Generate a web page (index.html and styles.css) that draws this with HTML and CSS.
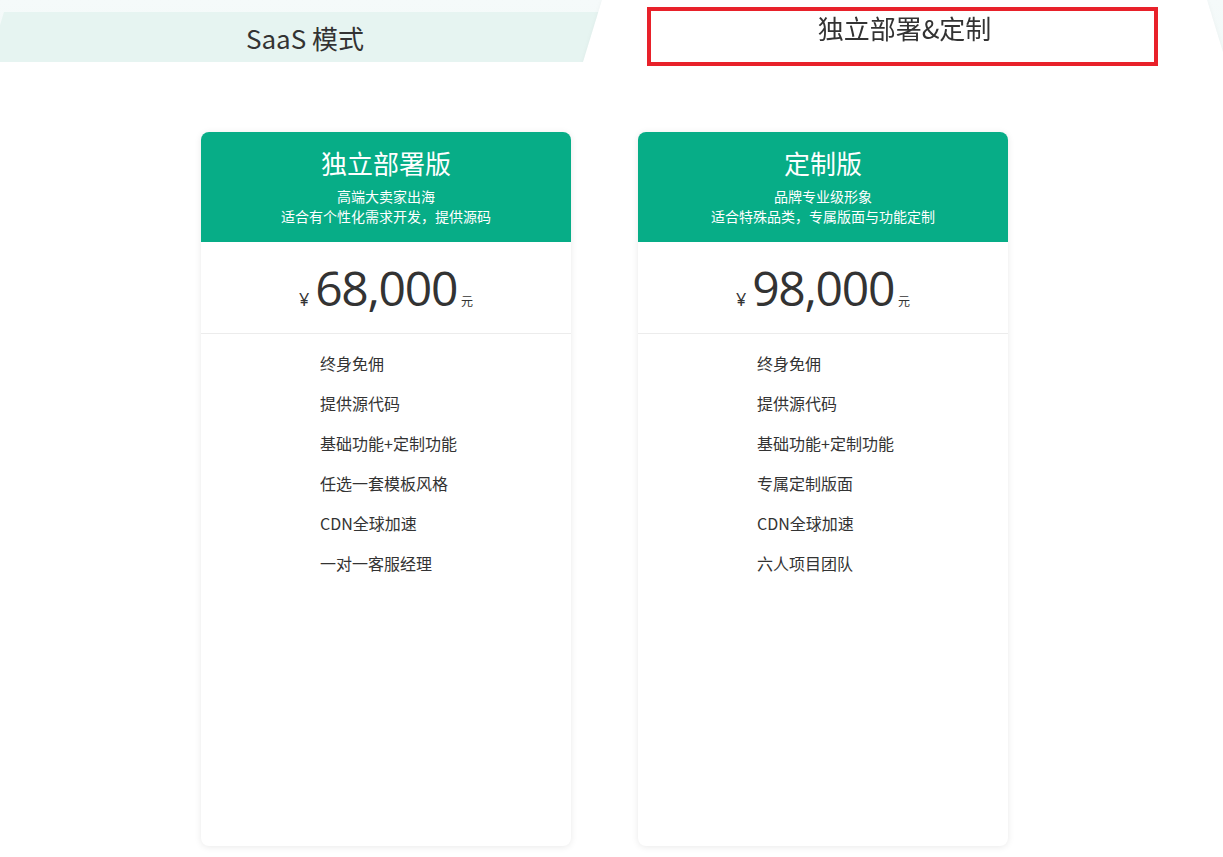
FILE: index.html
```html
<!DOCTYPE html>
<html lang="zh-CN">
<head>
<meta charset="utf-8">
<title>价格方案</title>
<link rel="stylesheet" href="styles.css">
</head>
<body>
<div class="page">
  <div class="tabbar">
    <div class="tab tab-inactive"><span class="tab-label">SaaS 模式</span></div>
    <div class="tab-active-wrap">
      <div class="tab tab-active"><span class="tab-label">独立部署&amp;定制</span></div>
    </div>
  </div>
  <div class="highlight"></div>

  <div class="cards">
    <div class="card">
      <div class="card-head">
        <div class="card-title">独立部署版</div>
        <div class="card-sub">高端大卖家出海</div>
        <div class="card-sub">适合有个性化需求开发，提供源码</div>
      </div>
      <div class="card-price">
        <span class="cur">¥</span><span class="num">68,000</span><span class="unit">元</span>
      </div>
      <ul class="features">
        <li>终身免佣</li>
        <li>提供源代码</li>
        <li>基础功能+定制功能</li>
        <li>任选一套模板风格</li>
        <li>CDN全球加速</li>
        <li>一对一客服经理</li>
      </ul>
    </div>
    <div class="card">
      <div class="card-head">
        <div class="card-title">定制版</div>
        <div class="card-sub">品牌专业级形象</div>
        <div class="card-sub">适合特殊品类，专属版面与功能定制</div>
      </div>
      <div class="card-price">
        <span class="cur">¥</span><span class="num">98,000</span><span class="unit">元</span>
      </div>
      <ul class="features">
        <li>终身免佣</li>
        <li>提供源代码</li>
        <li>基础功能+定制功能</li>
        <li>专属定制版面</li>
        <li>CDN全球加速</li>
        <li>六人项目团队</li>
      </ul>
    </div>
  </div>
</div>
</body>
</html>
```

FILE: styles.css
```css
* { box-sizing: border-box; }

html, body {
  margin: 0;
  padding: 0;
  background: #ffffff;
}

body {
  font-family: "Open Sans", "Noto Sans CJK SC", sans-serif;
  color: #333333;
  overflow: hidden;
}

.page {
  position: relative;
  width: 1223px;
  height: 857px;
}

/* ---------- tabs ---------- */
.tabbar {
  display: flex;
  height: 62px;
  background: linear-gradient(#f5fafa, #f2f9f8);
  overflow: hidden;
}

.tab {
  display: flex;
  justify-content: center;
  font-size: 26px;
  color: #333333;
  font-family: "Noto Sans CJK SC", sans-serif;
}

.tab-inactive {
  flex: 0 0 632px;
  margin-left: -11px;
  margin-top: 12px;
  height: 50px;
  line-height: 52px;
  background: #e6f4f1;
  clip-path: polygon(15px 0, 617px 0, 632px 100%, 0 100%);
}

.tab-active-wrap {
  flex: 0 0 643px;
  margin-left: -38px;
  height: 62px;
  position: relative;
  z-index: 1;
  filter: drop-shadow(0 2px 2px rgba(0, 0, 0, 0.05));
}

.tab-active {
  height: 62px;
  line-height: 56px;
  background: #ffffff;
  clip-path: polygon(19px 0, 624px 0, 643px 100%, 0 100%);
}

.tab-label {
  display: block;
}

.highlight {
  position: absolute;
  left: 647px;
  top: 7px;
  width: 511px;
  height: 59px;
  border: 4px solid #e8212a;
  z-index: 2;
}

/* ---------- cards ---------- */
.cards {
  display: flex;
  gap: 67px;
  padding-left: 201px;
  margin-top: 70px;
}

.card {
  width: 370px;
  height: 714px;
  background: #ffffff;
  border-radius: 8px;
  box-shadow: 0 1px 7px rgba(0, 0, 0, 0.09);
  overflow: hidden;
}

.card-head {
  height: 110px;
  background: #07ad87;
  color: #ffffff;
  text-align: center;
  padding-top: 13px;
  font-family: "Noto Sans CJK SC", sans-serif;
}

.card-title {
  font-size: 26px;
  line-height: 36px;
  margin-bottom: 6px;
}

.card-sub {
  font-size: 14px;
  line-height: 19.5px;
}

.card-price {
  height: 92px;
  border-bottom: 1px solid #ececec;
  text-align: center;
  font-size: 48px;
  line-height: 90px;
  padding-top: 1px;
  color: #333333;
}

.cur {
  font-size: 18px;
  margin-right: 6px;
}

.num {
  font-size: 48px;
  letter-spacing: -1.3px;
}

.unit {
  font-size: 12px;
  margin-left: 4px;
  font-family: "Noto Sans CJK SC", sans-serif;
}

.features {
  list-style: none;
  margin: 0;
  padding: 9px 0 0 119px;
}

.features li {
  font-size: 16px;
  line-height: 40px;
  color: #333333;
  font-family: "Noto Sans CJK SC", sans-serif;
}
```
